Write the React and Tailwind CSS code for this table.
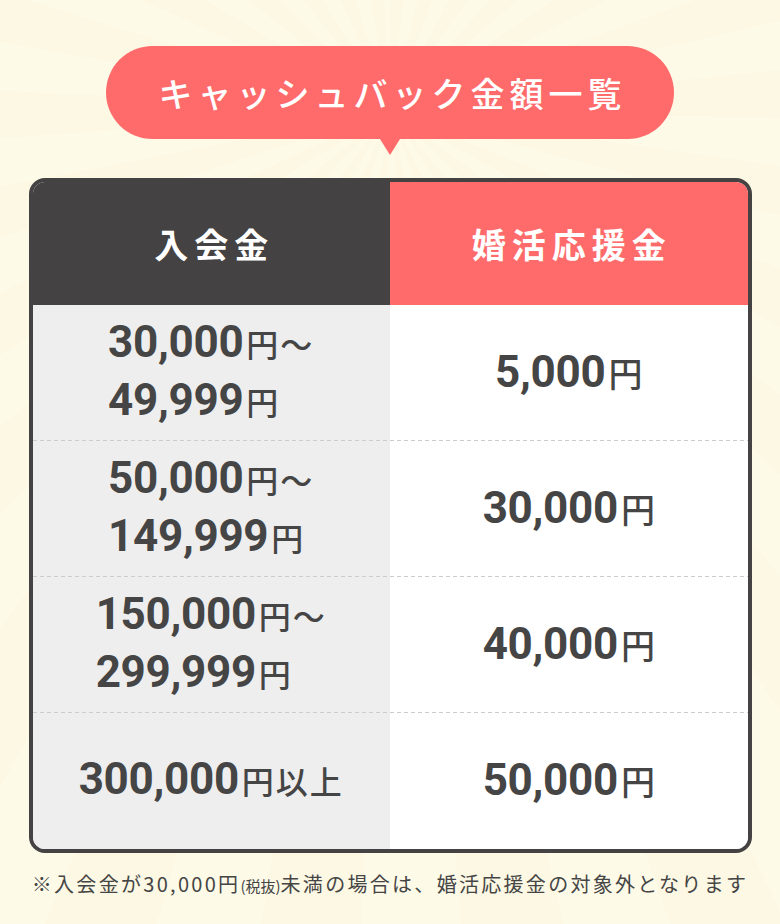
import React from "react";

const JP = "font-['Noto_Sans_CJK_JP','Noto_Sans',sans-serif]";
const NUM = "font-['Roboto','Noto_Sans_CJK_JP',sans-serif]";

function Amount({ n, suffix, big }) {
  return (
    <span className="whitespace-nowrap">
      <span className={`${NUM} font-bold text-[44px] tracking-[-0.3px]`}>{n}</span>
      <span
        className={
          big
            ? `${JP} text-[34px] font-medium ml-[3px]`
            : `${JP} text-[32px] font-medium ml-[3px] tracking-[2px]`
        }
      >
        {suffix}
      </span>
    </span>
  );
}

const rows = [
  { l1: ["30,000", "円～"], l2: ["49,999", "円"], r: "5,000" },
  { l1: ["50,000", "円～"], l2: ["149,999", "円"], r: "30,000" },
  { l1: ["150,000", "円～"], l2: ["299,999", "円"], r: "40,000" },
  { l1: ["300,000", "円以上"], l2: null, r: "50,000" },
];

export default function App() {
  return (
    <div className="relative w-[780px] h-[924px] overflow-hidden bg-[#fcf8e4]">
      <div className="absolute inset-0 bg-[repeating-conic-gradient(from_0deg_at_50%_12%,#fcf8e3_0deg_7deg,#fdfae8_7deg_14deg)]" />
      <div className="relative flex flex-col items-center">
        {/* Title bubble */}
        <div className="relative mt-[46px] w-[568px] h-[93px] rounded-full bg-[#ff6b6b] flex items-center justify-center">
          <span className={`${JP} text-white text-[34px] font-medium tracking-[5px] pl-[5px] leading-none`}>
            キャッシュバック金額一覧
          </span>
          <div className="absolute left-1/2 -translate-x-1/2 top-full w-0 h-0 border-l-[10px] border-r-[10px] border-t-[16px] border-l-transparent border-r-transparent border-t-[#ff6b6b]" />
        </div>

        {/* Table */}
        <div className="mt-[39px] w-[723px] border-4 border-[#444242] rounded-[16px] overflow-hidden bg-white">
          <div className="grid grid-cols-2 h-[123px]">
            <div className={`${JP} bg-[#444242] text-white text-[34px] font-bold tracking-[6px] pl-[6px] flex items-center justify-center`}>
              入会金
            </div>
            <div className={`${JP} bg-[#ff6b6b] text-white text-[34px] font-bold tracking-[6px] pl-[6px] flex items-center justify-center`}>
              婚活応援金
            </div>
          </div>
          {rows.map((row, i) => (
            <div key={i} className="relative grid grid-cols-2 h-[136px] text-[#454545]">
              <div className="bg-[#eeeeee] flex items-center justify-center">
                <div className="leading-[49px] pt-[6px]">
                  <div>
                    <Amount n={row.l1[0]} suffix={row.l1[1]} />
                  </div>
                  {row.l2 && (
                    <div>
                      <Amount n={row.l2[0]} suffix={row.l2[1]} />
                    </div>
                  )}
                </div>
              </div>
              <div className="bg-white flex items-center justify-center">
                <div className="leading-[49px] pt-[8px]">
                  <Amount n={row.r} suffix="円" big />
                </div>
              </div>
              {i < rows.length - 1 && (
                <div className="absolute left-0 right-0 bottom-0 h-px bg-[linear-gradient(to_right,#cccccc_60%,transparent_60%)] bg-[length:7px_1px]" />
              )}
            </div>
          ))}
        </div>

        {/* Note */}
        <p className={`${JP} mt-[16px] text-[20px] leading-[30px] tracking-[2.3px] text-[#454545] whitespace-nowrap`}>
          ※入会金が30,000円<span className="text-[15px] tracking-[0px]">(税抜)</span>未満の場合は、婚活応援金の対象外となります
        </p>
      </div>
    </div>
  );
}
